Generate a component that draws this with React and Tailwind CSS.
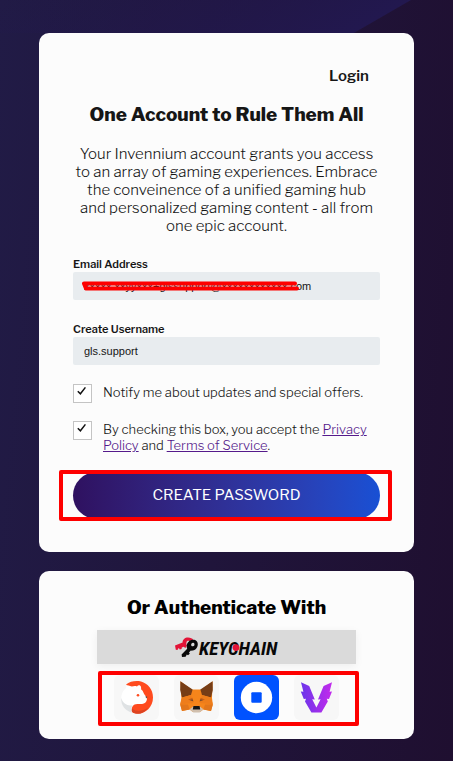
import React from "react";

const franklin = "font-['Libre_Franklin',Inter,'Open_Sans',sans-serif]";

function Field({ id, label, children, ...props }) {
  return (
    <div>
      <label htmlFor={id} className="block text-[11px] leading-4 font-semibold text-[#161616]">
        {label}
      </label>
      <div className="relative">
        <input
          id={id}
          className="block h-7 w-full rounded-xs bg-[#e8ecef] px-[11px] font-['Liberation_Sans',Arial,sans-serif] text-[11px] text-[#161616] outline-none"
          {...props}
        />
        {children}
      </div>
    </div>
  );
}

function Check({ id, children }) {
  return (
    <div className="flex items-start gap-[11px]">
      <span className="relative flex shrink-0">
        <input
          id={id}
          type="checkbox"
          defaultChecked
          className="h-[19px] w-[19px] appearance-none border border-[#c4c4c4] bg-white"
        />
        <svg
          aria-hidden="true"
          viewBox="0 0 19 19"
          className="pointer-events-none absolute inset-0 h-[19px] w-[19px]"
        >
          <path d="M4.8 7.2 L7.4 9.8 L12.4 3.4" fill="none" stroke="#111" strokeWidth="1.5" />
        </svg>
      </span>
      <label htmlFor={id} className="text-[13px] leading-4 font-light text-[#161616]">
        {children}
      </label>
    </div>
  );
}

function KeychainLogo() {
  return (
    <svg role="img" aria-label="Keychain" viewBox="0 0 106 22" className="h-[22px] w-[106px]">
      <path
        d="M1 9.6 L8.6 6.6 C8.4 3.4 11 1.4 14 1.4 C16.6 1.4 18.4 2.4 19.2 3.6 L15.6 5.2 C14.2 4.4 12.6 5 12.4 6.8 C12.2 8 12.4 8.8 13 9.6 L11.4 12 L9.6 10.8 L7.8 11.4 L7.6 13 L5.8 13.4 L5 12.2 L4 12.6 L3.6 14 L1.8 13.8 Z"
        fill="#e31337"
      />
      <path
        fillRule="evenodd"
        d="M17.4 4 C20.8 2.8 24 5 23.8 8.4 C23.6 12 20.6 15 16.8 14.6 L15 16.4 L15.8 17.8 L14 19.2 L12.8 18.4 L11.6 20.8 L8 21 L7.6 18.4 L13.2 12.8 C11.8 9 13.4 5.4 17.4 4 Z M18.8 6.8 C17.2 7.2 16.8 8.8 17.4 9.8 C18.2 10.8 19.8 10.4 20.4 9.2 C20.8 7.6 20 6.4 18.8 6.8 Z"
        fill="#080808"
      />
      <text
        x="25"
        y="18.5"
        className="font-['Liberation_Sans_Narrow','Roboto_Condensed',sans-serif] text-[19px] font-bold italic"
        fill="#080808"
      >
        KEYCHAIN
      </text>
      <circle cx="62" cy="11.6" r="3.4" fill="#e31337" />
    </svg>
  );
}

function BearLogo() {
  return (
    <svg aria-hidden="true" viewBox="0 0 45 45" className="h-[45px] w-[45px]">
      <path d="M12 9.6 C16 6.4 22 5.4 27 6.6 C34 8.6 39 14.6 39 22.4 C39 32 31.6 38.6 23.4 38.6 C19.4 38.6 16.6 36.6 16.6 33.4 C16.6 30 19 28.6 22.6 28.4 L31 26 L28 17 L16 12 Z" fill="#ff4b1f" />
      <path d="M17 31 C18 37 28 37 34.4 32.4 C31 37 27.6 38.8 23 38.7 C18.6 38.6 16 35.4 17 31 Z" fill="#dc4321" />
      <path d="M12.4 13 C11.6 11.6 12.8 10.2 14.6 10.6 L17.8 11.6 C19.6 10.8 21.6 10.8 23 11.4 C24 9.8 26.6 9.8 27 12 L27.2 14.6 C29.6 16 29.4 19 31.2 20.6 C33.2 22.4 33.6 24.4 32.2 26.4 C31 28.8 27.6 29.4 24.4 29 C19.6 28.4 17 31.6 17.6 37.6 C11 35.6 7 30 7.2 24 C7.4 18 9.4 15 12.4 13 Z" fill="#fff" />
      <path d="M7.2 23 C9 28.6 13.6 31.4 18.6 30.2 C17.2 32 17.2 35 17.8 37.7 C11 35.8 6.6 30.2 7.2 23 Z" fill="#dfe2e4" />
      <circle cx="24" cy="20.2" r="1.3" fill="#ff4b1f" />
      <path d="M31.6 21 L33.4 22 L32 23.4 Z" fill="#444" />
    </svg>
  );
}

function FoxLogo() {
  return (
    <svg aria-hidden="true" viewBox="0 0 45 45" className="h-[45px] w-[45px]">
      <path d="M6.4 6.2 L17.6 14.4 H27.4 L38.6 6.2 L38 23 L38.8 29.4 L37 36 L29.4 34.4 L26 37 H19 L15.6 34.4 L8 36 L6.2 29.4 L7.4 23 Z" fill="#f6851b" />
      <path d="M6.4 6.2 L18.6 14.4 L17 20 L8 22.6 L6.2 15 Z" fill="#763d16" />
      <path d="M38.6 6.2 L26.4 14.4 L28 20 L37 22.6 L38.8 15 Z" fill="#763d16" />
      <path d="M8 22.6 L17 20 L19.4 28 L14 28.6 L6.2 29.4 Z M37 22.6 L28 20 L25.6 28 L31 28.6 L38.8 29.4 Z" fill="#ee7d1b" />
      <path d="M6.2 29.4 H14 L15.6 34.4 L8 36 Z M38.8 29.4 H31 L29.4 34.4 L37 36 Z" fill="#e2761b" />
      <path d="M14 24.6 L18.4 22.8 L19.6 26.8 Z M31 24.6 L26.6 22.8 L25.4 26.8 Z" fill="#cd6116" />
      <path d="M15.8 24.9 L18.6 24.4 L19 26 Z M29.2 24.9 L26.4 24.4 L26 26 Z" fill="#5a4636" />
      <path d="M15.6 34.2 L19.2 31.4 H25.8 L29.4 34.2 L25.6 37.4 H19.4 Z" fill="#d0bfae" />
      <path d="M19.4 31 H25.6 L26.2 34.6 H18.8 Z" fill="#161616" />
    </svg>
  );
}

function StopLogo() {
  return (
    <svg aria-hidden="true" viewBox="0 0 45 45" className="h-[45px] w-[45px]">
      <circle cx="22.5" cy="22.5" r="15.7" fill="#fff" />
      <rect x="17.3" y="17.3" width="10.4" height="10.4" rx="1" fill="#0052ff" />
    </svg>
  );
}

function WingLogo() {
  return (
    <svg aria-hidden="true" viewBox="0 0 45 45" className="h-[45px] w-[45px]">
      <defs>
        <linearGradient id="wing" x1="0" x2="1" y1="0" y2="0">
          <stop offset="0" stopColor="#6a35ea" />
          <stop offset="1" stopColor="#c32aec" />
        </linearGradient>
      </defs>
      <path
        d="M7 7.2 L15.2 11 L20.8 24.6 L18.2 24.2 L22.4 32.4 L26.6 24.2 L24 24.6 L29.6 11 L38 7.2 L35.6 16.8 L38 16.4 L35 24 L32.8 23.8 L33.8 26.6 L27.4 37.6 H17.4 L11 26.6 L12 23.8 L9.8 24 L6.8 16.4 L9.4 16.8 Z"
        fill="url(#wing)"
      />
    </svg>
  );
}

function WalletButton({ label, tone, children }) {
  return (
    <button type="button" aria-label={label} className={`h-[45px] w-[45px] rounded-md ${tone}`}>
      {children}
    </button>
  );
}

export default function App() {
  return (
    <div
      className={`${franklin} min-h-screen bg-[linear-gradient(150deg,#22184f00_0px,#22184f_205px,transparent_206px),linear-gradient(95deg,#211b46,#1f0f30)] bg-[size:100%_33px,100%_100%] bg-no-repeat px-[39px] pt-[33px] pb-[22px] text-[#161616]`}
    >
      <main className="flex flex-col gap-[19px]">
        <section className="rounded-[10px] bg-[#fcfcfc] px-[34px] pt-[33px] pb-[33px]">
          <div className="flex justify-end pr-[11px]">
            <a href="#login" className="text-[15px] leading-5 font-semibold">
              Login
            </a>
          </div>
          <h1 className="mt-[17px] text-center text-[19px] leading-6 font-extrabold whitespace-nowrap">
            One Account to Rule Them All
          </h1>
          <p className="mt-[18px] text-center text-[15px] leading-[18px] font-light whitespace-nowrap">
            Your Invennium account grants you access
            <br />
            to an array of gaming experiences. Embrace
            <br />
            the conveinence of a unified gaming hub
            <br />
            and personalized gaming content - all from
            <br />
            one epic account.
          </p>
          <form className="mt-[21px]" onSubmit={(e) => e.preventDefault()}>
            <div className="flex flex-col gap-[21px]">
              <Field id="email" label="Email Address" type="text" defaultValue="xxxxx.xxyyxxx+glssupport@xxxxxxxxxxxx.com">
                <svg
                  aria-hidden="true"
                  viewBox="0 0 220 12"
                  className="pointer-events-none absolute top-2 left-2 h-3 w-[220px]"
                >
                  <path
                    d="M3 3.5 H214 M3 3.5 L5 8.5 M5 8.5 H216"
                    fill="none"
                    stroke="#fe0000"
                    strokeWidth="4"
                    strokeLinecap="round"
                    strokeLinejoin="round"
                  />
                </svg>
              </Field>
              <Field id="username" label="Create Username" type="text" defaultValue="gls.support" />
            </div>
            <div className="mt-[19px] flex flex-col gap-[18px]">
              <Check id="updates">Notify me about updates and special offers.</Check>
              <Check id="terms">
                By checking this box, you accept the{" "}
                <a href="#privacy" className="text-[#551a8b] underline">
                  Privacy
                  <br />
                  Policy
                </a>{" "}
                and{" "}
                <a href="#terms" className="text-[#551a8b] underline">
                  Terms of Service
                </a>
                .
              </Check>
            </div>
            <div className="relative mt-[19px]">
              <button
                type="submit"
                className="block h-[47px] w-full rounded-full bg-linear-to-r from-[#2f1160] to-[#1850d4] text-[15px] text-white"
              >
                CREATE PASSWORD
              </button>
              <div className="pointer-events-none absolute -top-[2px] -right-3 -bottom-[2px] -left-[14px] rounded-xs border-4 border-[#fe0000]" />
            </div>
          </form>
        </section>
        <section className="flex flex-col items-center rounded-[10px] bg-[#fcfcfc] px-[34px] pt-[25px] pb-[19px]">
          <h2 className="text-[19px] leading-6 font-extrabold text-black">Or Authenticate With</h2>
          <button
            type="button"
            className="mt-[10px] flex h-[34px] w-[259px] items-center justify-center bg-[#dadada] shadow-[0_2px_8px_rgba(0,0,0,0.06)]"
          >
            <KeychainLogo />
          </button>
          <div className="relative mt-[11px] flex gap-[15px]">
            <WalletButton label="Bear wallet" tone="bg-[#f7f7f7]">
              <BearLogo />
            </WalletButton>
            <WalletButton label="Fox wallet" tone="bg-[#f7f7f7]">
              <FoxLogo />
            </WalletButton>
            <WalletButton label="Coin wallet" tone="bg-[#0052ff]">
              <StopLogo />
            </WalletButton>
            <WalletButton label="Wing wallet" tone="bg-[#f7f7f7]">
              <WingLogo />
            </WalletButton>
            <div className="pointer-events-none absolute -top-1 -right-5 -bottom-1.5 -left-4 rounded-xs border-4 border-[#fe0000]" />
          </div>
        </section>
      </main>
    </div>
  );
}
